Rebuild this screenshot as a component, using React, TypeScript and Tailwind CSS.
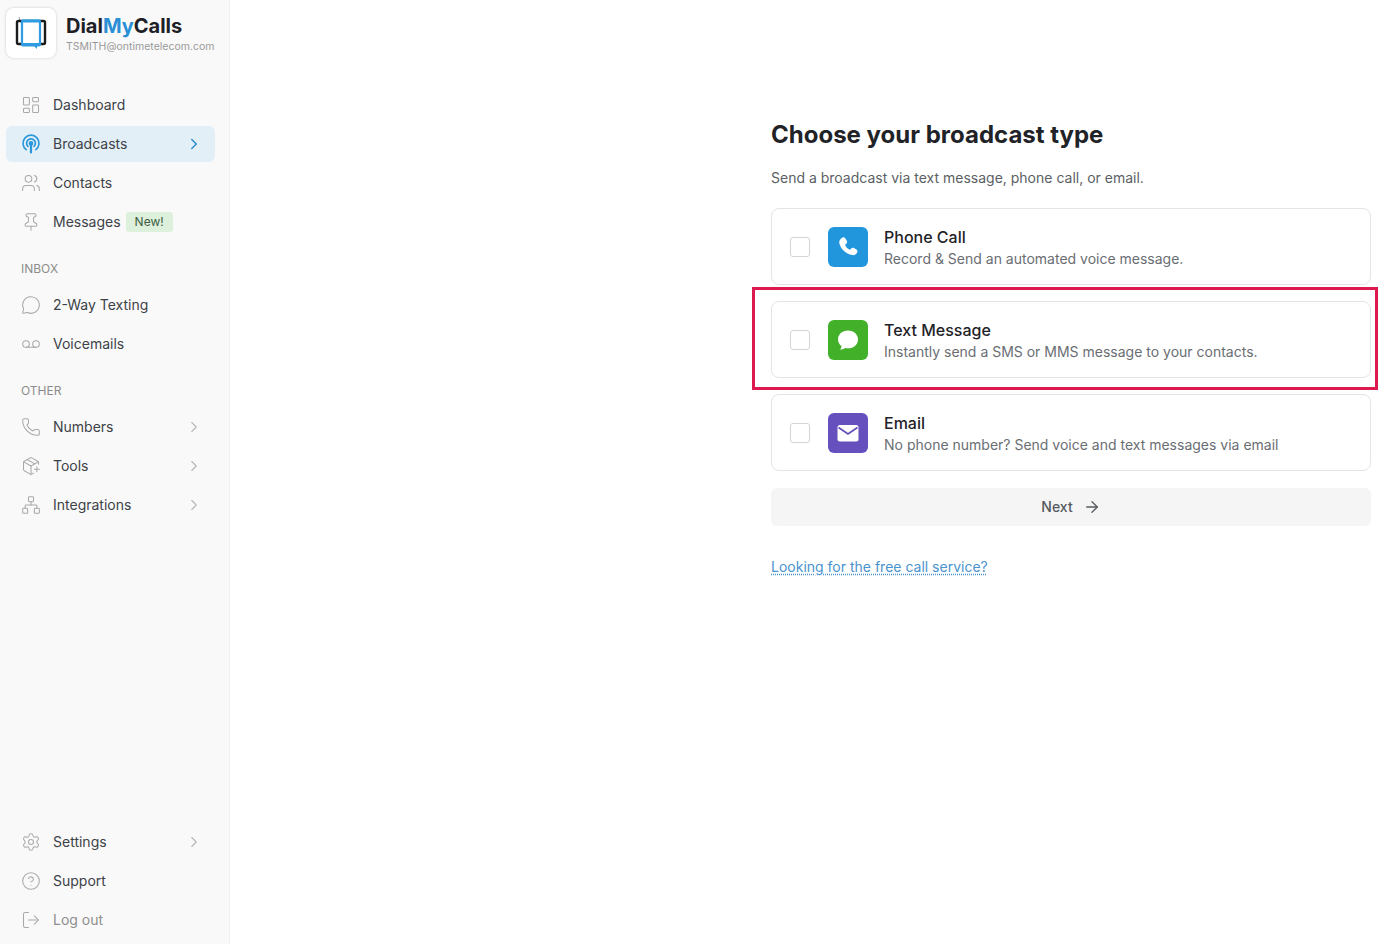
import React from 'react';
import {
  ArrowRight,
  ChevronRight,
  CircleHelp,
  LayoutDashboard,
  LogOut,
  MessageCircle,
  Network,
  PackagePlus,
  Phone,
  Pin,
  Settings,
  Users,
  Voicemail,
} from 'lucide-react';

const BroadcastIcon = ({ className }: { className?: string }) => (
  <svg viewBox="0 0 20 20" fill="none" stroke="currentColor" strokeWidth="1.7" strokeLinecap="round" className={className}>
    <path d="M5.2 15.6a8 8 0 1 1 9.6 0" />
    <path d="M6.9 12.4a4.4 4.4 0 1 1 6.2 0" />
    <circle cx="10" cy="9.4" r="1.5" fill="currentColor" />
    <path d="M10 11v7.4" strokeWidth="2.2" />
  </svg>
);

const Logo = () => (
  <svg viewBox="0 0 32 36" fill="none" className="h-[36px] w-[32px]">
    <path d="M5.5 7.5 4 2" stroke="#8fa3b5" strokeWidth="1" />
    <path d="M7 6H3.5A1.5 1.5 0 0 0 2 7.5v20A1.5 1.5 0 0 0 3.5 29H7" stroke="#1b1b1b" strokeWidth="2.4" />
    <path d="M25 6h3.5A1.5 1.5 0 0 1 30 7.5v20a1.5 1.5 0 0 1-1.5 1.5H25" stroke="#1b1b1b" strokeWidth="2.4" />
    <rect x="7" y="5.5" width="18" height="25" rx="1" fill="#fff" stroke="#2f9be0" strokeWidth="2.2" />
    <path d="M7 4.5h18v3H7zM7 28h18v3H7z" fill="#2f9be0" />
    <path d="M19 31l3 3v-3z" fill="#2f9be0" />
  </svg>
);

type NavItem = {
  label: string;
  icon: React.ComponentType<{ className?: string; strokeWidth?: number }>;
  chevron?: boolean;
  badge?: string;
  active?: boolean;
  muted?: boolean;
};

const NavRow = ({ item }: { item: NavItem }) => {
  const Icon = item.icon;
  return (
    <a
      className={`flex h-9 items-center rounded-md pl-[15px] pr-[12px] text-sm ${
        item.active ? 'bg-[#e3eff7] text-[#3d4248]' : item.muted ? 'text-[#8f8f8f]' : 'text-[#3d4248]'
      }`}
    >
      <Icon
        strokeWidth={1.25}
        className={`h-5 w-5 shrink-0 ${item.active ? 'text-[#2b97db]' : 'text-[#a9a9a9]'}`}
      />
      <span className="ml-3">{item.label}</span>
      {item.badge && (
        <span className="ml-[5px] rounded-[3px] bg-[#dcf0dc] px-[9px] py-[2px] text-xs leading-4 text-[#3f5c3f]">
          {item.badge}
        </span>
      )}
      {item.chevron && (
        <ChevronRight
          strokeWidth={item.active ? 2 : 1.5}
          className={`ml-auto h-[18px] w-[18px] ${item.active ? 'text-[#2b8fd0]' : 'text-[#b8b8b8]'}`}
        />
      )}
    </a>
  );
};

const mainNav: NavItem[] = [
  { label: 'Dashboard', icon: LayoutDashboard },
  { label: 'Broadcasts', icon: BroadcastIcon, chevron: true, active: true },
  { label: 'Contacts', icon: Users },
  { label: 'Messages', icon: Pin, badge: 'New!' },
];
const inboxNav: NavItem[] = [
  { label: '2-Way Texting', icon: MessageCircle },
  { label: 'Voicemails', icon: Voicemail },
];
const otherNav: NavItem[] = [
  { label: 'Numbers', icon: Phone, chevron: true },
  { label: 'Tools', icon: PackagePlus, chevron: true },
  { label: 'Integrations', icon: Network, chevron: true },
];
const bottomNav: NavItem[] = [
  { label: 'Settings', icon: Settings, chevron: true },
  { label: 'Support', icon: CircleHelp },
  { label: 'Log out', icon: LogOut, muted: true },
];

const NavGroup = ({ items }: { items: NavItem[] }) => (
  <div className="flex flex-col gap-[3px]">
    {items.map((item) => (
      <NavRow key={item.label} item={item} />
    ))}
  </div>
);

const SectionLabel = ({ children }: { children: React.ReactNode }) => (
  <div className="mb-[10px] mt-[21px] pl-[15px] text-xs leading-4 text-[#8c8c8c]">{children}</div>
);

const PhoneGlyph = () => (
  <svg viewBox="0 0 24 24" className="h-[24px] w-[24px]" fill="#fff">
    <path d="M6.6 2.6c.9-.5 2-.3 2.6.6l1.6 2.6c.5.8.4 1.8-.2 2.5L9.4 9.6c-.2.3-.2.6-.1.9.9 1.800 2.300 3.200 4.100 4.100.3.100.6.100.9-.1l1.200-1.200c.7-.6 1.700-.7 2.500-.2l2.400 1.500c1 .6 1.300 1.800.8 2.800-.9 1.900-2.800 3.200-4.900 2.700C9.600 18.900 4.700 13.900 3.300 8.300 2.800 6 4.300 3.700 6.600 2.600z" />
  </svg>
);

const BubbleGlyph = () => (
  <svg viewBox="0 0 24 24" className="h-[24px] w-[24px]" fill="#fff">
    <path d="M12 2.500c5.800 0 10 3.900 10 8.900s-4.200 8.900-10 8.900c-1 0-2-.1-2.900-.4-1.300 1-3 1.500-5.100 1.500 1-1 1.500-2.100 1.500-3.400C3.500 16.700 2 14.200 2 11.400c0-5 4.200-8.900 10-8.900z" />
  </svg>
);

const MailGlyph = () => (
  <svg viewBox="0 0 24 24" className="h-[24px] w-[24px]">
    <rect x="1.500" y="4" width="21" height="16.500" rx="2.500" fill="#fff" />
    <path d="M2.500 6.500 12 13l9.500-6.500" fill="none" stroke="#6650bd" strokeWidth="1.800" />
  </svg>
);

const options = [
  {
    title: 'Phone Call',
    text: 'Record & Send an automated voice message.',
    tile: 'bg-[#2196dc]',
    glyph: <PhoneGlyph />,
  },
  {
    title: 'Text Message',
    text: 'Instantly send a SMS or MMS message to your contacts.',
    tile: 'bg-[#43b02a]',
    glyph: <BubbleGlyph />,
    highlighted: true,
  },
  {
    title: 'Email',
    text: 'No phone number? Send voice and text messages via email',
    tile: 'bg-[#6650bd]',
    glyph: <MailGlyph />,
  },
];

export default function App() {
  return (
    <div className="flex h-[944px] w-full overflow-hidden bg-white font-['Inter',sans-serif]">
      {/* Sidebar */}
      <aside className="flex w-[230px] shrink-0 flex-col border-r border-[#f0f0f0] bg-[#f9f9f9] pb-[6px] pl-[6px] pr-[14px] pt-2">
        <div className="flex items-center">
          <div className="flex h-[50px] w-[50px] items-center justify-center rounded-lg bg-white shadow-[0_0_3px_rgba(0,0,0,0.18)]">
            <Logo />
          </div>
          <div className="ml-[10px]">
            <div className="text-xl font-bold leading-[26px] text-[#1d2127]">
              Dial<span className="text-[#2b8fd6]">My</span>Calls
            </div>
            <div className="mt-[1px] whitespace-nowrap text-[10.500px] leading-[14px] text-[#9a9a9a]">
              TSMITH@ontimetelecom.com
            </div>
          </div>
        </div>

        <nav className="mt-[29px]">
          <NavGroup items={mainNav} />
          <SectionLabel>INBOX</SectionLabel>
          <NavGroup items={inboxNav} />
          <SectionLabel>OTHER</SectionLabel>
          <NavGroup items={otherNav} />
        </nav>

        <div className="mt-auto">
          <NavGroup items={bottomNav} />
        </div>
      </aside>

      {/* Main */}
      <main className="flex flex-1 justify-end pr-3 pt-[119px]">
        <div className="w-[600px]">
          <h1 className="text-2xl font-bold leading-8 text-[#1f2328]">Choose your broadcast type</h1>
          <p className="mt-[17px] text-sm leading-5 text-[#5b5f64]">
            Send a broadcast via text message, phone call, or email.
          </p>

          <div className="mt-5 flex flex-col gap-4">
            {options.map((option) => (
              <div
                key={option.title}
                className="relative flex h-[77px] items-center rounded-lg border border-[#e4e4e4] bg-white pl-[18px]"
              >
                <span className="h-5 w-5 shrink-0 rounded-[3px] border border-[#d4d4d4] bg-white" />
                <div className={`ml-[18px] flex h-10 w-10 shrink-0 items-center justify-center rounded-md ${option.tile}`}>
                  {option.glyph}
                </div>
                <div className="ml-4">
                  <div className="text-base font-medium leading-6 text-[#1f2328]">{option.title}</div>
                  <div className="text-sm leading-5 text-[#6a6e73]">{option.text}</div>
                </div>
                {option.highlighted && (
                  <div className="absolute -bottom-[13px] -left-[20px] -right-[8px] -top-[15px] border-[3px] border-[#dc1a50]" />
                )}
              </div>
            ))}
          </div>

          <button className="mt-[17px] flex h-[38px] w-full items-center justify-center rounded-md bg-[#f5f5f5] text-sm font-medium text-[#55595e]">
            Next
            <ArrowRight strokeWidth={1.75} className="ml-[10px] h-[18px] w-[18px]" />
          </button>

          <a className="mt-[31px] block text-sm leading-5 text-[#4a93cf] underline decoration-dotted underline-offset-2">
            Looking for the free call service?
          </a>
        </div>
      </main>
    </div>
  );
}
